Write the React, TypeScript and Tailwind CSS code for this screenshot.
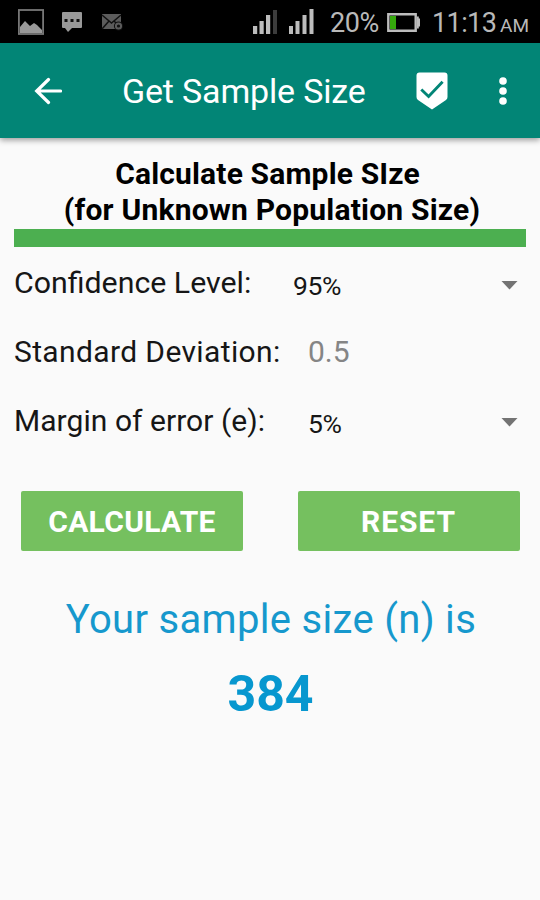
import React from "react";

function StatusBar() {
  return (
    <div className="flex h-[43px] items-center bg-black text-[#b9b9b9]">
      <svg className="ml-[18px] h-[26px] w-[26px] shrink-0" viewBox="0 0 26 26">
        <rect x="0.9" y="1" width="24.2" height="24" fill="none" stroke="#777" strokeWidth="1.8" />
        <path d="M2 24v-6l5-6 5 5 4-3 3 2 5 5v3z" fill="#999" />
      </svg>
      <svg className="ml-[17px] h-[22px] w-[22px] shrink-0" viewBox="0 0 22 22">
        <path d="M2 1h18q1 0 1 1v14q0 1-1 1h-9l-4 4-3-4H2q-1 0-1-1V2q0-1 1-1z" fill="#999" />
        <path d="M3.500 8h3v3h-3zM9.500 8h3v3h-3zM15.500 8h3v3h-3z" fill="#111" />
      </svg>
      <svg className="ml-[18px] h-[20px] w-[23px] shrink-0" viewBox="0 0 23 20">
        <path d="M1 2h19v15H1z" fill="#5c5c5c" />
        <path d="M1 3l9.500 8L20 3M1 17l7-8M13 9l4 4" fill="none" stroke="#111" strokeWidth="1.500" />
        <circle cx="17.500" cy="14" r="4.600" fill="#111" />
        <circle cx="17.500" cy="14" r="2.600" fill="none" stroke="#5c5c5c" strokeWidth="2" />
      </svg>
      <svg className="ml-[129px] mt-[1px] h-[26px] w-[62px] shrink-0" viewBox="0 0 62 26">
        <path d="M0 17h4.200v8H0zM6.500 12h4.200v13H6.500zM13 6h4.200v19H13z" fill="#bdbdbd" />
        <path d="M20 1h4v24h-4z" fill="#3c3c3c" />
        <path d="M36 17h4v8h-4zM42.500 12h4v13h-4zM49.500 6h4v19h-4zM56.500 0h4v25h-4z" fill="#bdbdbd" />
      </svg>
      <span className="ml-[15px] w-[57px] whitespace-nowrap pt-[4px] text-[27px] leading-[39px] tracking-[-0.4px]">20%</span>
      <svg className="mt-[2px] h-[19px] w-[34px] shrink-0" viewBox="0 0 34 19">
        <path d="M1.300 1.300h27.400v16.400H1.300z" fill="none" stroke="#bdbdbd" strokeWidth="2.400" />
        <path d="M30 3.500h1.800v2H33v8h-1.200v2H30z" fill="#bdbdbd" />
        <path d="M3 3h6v13H3z" fill="#35a80c" />
      </svg>
      <span className="ml-[11px] w-[68px] whitespace-nowrap pt-[4px] text-[27px] leading-[39px] tracking-[-0.6px]">11:13</span>
      <span className="mt-[8px] whitespace-nowrap text-[19px] leading-[20px]">AM</span>
    </div>
  );
}

function AppBar() {
  return (
    <header className="relative z-10 flex h-[95px] items-center bg-[#028576] text-white shadow-[0_2px_6px_rgba(0,0,0,0.4)]">
      <svg className="ml-[34px] h-[28px] w-[28px] shrink-0" viewBox="0 0 28 28">
        <path d="M26.500 14H3M14.500 2.500L2.700 14l11.800 11.500" fill="none" stroke="#fff" strokeWidth="3.200" strokeLinecap="round" />
      </svg>
      <h1 className="ml-[60px] w-[294px] whitespace-nowrap text-[34px] leading-[40px] tracking-[-0.17px]">Get Sample Size</h1>
      <svg className="h-[38px] w-[32px] shrink-0" viewBox="0 0 32 38">
        <path d="M3.500 0.500h25q3 0 3 3V25q0 2-1.500 3L16 37.500 2 28Q0.500 27 0.500 25V3.500q0-3 3-3z" fill="#fff" />
        <path d="M5.300 17.500l7.300 7 14-14.800" fill="none" stroke="#028576" strokeWidth="2.900" />
      </svg>
      <svg className="ml-[51px] h-[28px] w-[8px] shrink-0" viewBox="0 0 8 28" fill="#fff">
        <circle cx="4" cy="4" r="3.800" />
        <circle cx="4" cy="14" r="3.800" />
        <circle cx="4" cy="24" r="3.800" />
      </svg>
    </header>
  );
}

function Caret() {
  return (
    <svg className="ml-auto mr-[8px] mt-[4px] h-[9px] w-[17px] shrink-0" viewBox="0 0 17 9">
      <path d="M0.500 0h16l-8 8.500z" fill="#737373" />
    </svg>
  );
}

export default function App() {
  return (
    <div className="flex h-[900px] w-[540px] flex-col overflow-hidden bg-[#fafafa] font-[Roboto,sans-serif] text-[#161616]">
      <StatusBar />
      <AppBar />
      <main className="flex flex-col px-[14px] pt-[18px]">
        <h2 className="whitespace-nowrap text-center text-[30px] font-bold leading-[36px] text-black">
          <span className="block pr-[5px] tracking-[0.16px]">Calculate Sample SIze</span>
          <span className="block pl-[4px] tracking-[0.2px]">(for Unknown Population Size)</span>
        </h2>
        <div className="mt-[1px] h-[18px] bg-[#4caf50]" />
        <div className="mt-[15px] flex h-[42px] items-center">
          <span className="w-[279px] whitespace-nowrap text-[30.3px] leading-[42px]">Confidence Level:</span>
          <span className="pt-[6px] text-[26.5px] tracking-[-0.4px]">95%</span>
          <Caret />
        </div>
        <div className="mt-[26px] flex h-[42px] items-center">
          <span className="w-[294px] whitespace-nowrap text-[30px] tracking-[0.37px]">Standard Deviation:</span>
          <span className="text-[30px] text-[#858585]">0.5</span>
        </div>
        <div className="mt-[27px] flex h-[42px] items-center">
          <span className="w-[294px] whitespace-nowrap text-[30px] tracking-[0.05px]">Margin of error (e):</span>
          <span className="pt-[7px] text-[26.5px] tracking-[-0.4px]">5%</span>
          <Caret />
        </div>
        <div className="mt-[50px] flex justify-between pl-[7px] pr-[6.5px]">
          <button className="h-[60px] w-[222px] rounded-[2px] bg-[#75c05f] text-[30px] font-bold tracking-[0.3px] text-white">CALCULATE</button>
          <button className="h-[60px] w-[222px] rounded-[2px] bg-[#75c05f] text-[30px] font-bold tracking-[0.9px] text-white">RESET</button>
        </div>
        <p className="mt-[44px] whitespace-nowrap pl-[2px] text-center text-[40px] leading-[50px] tracking-[0.32px] text-[#1698cd]">Your sample size (n) is</p>
        <p className="mt-[19px] pl-[1px] text-center text-[50px] font-bold leading-[60px] text-[#0797cf]">384</p>
      </main>
    </div>
  );
}
